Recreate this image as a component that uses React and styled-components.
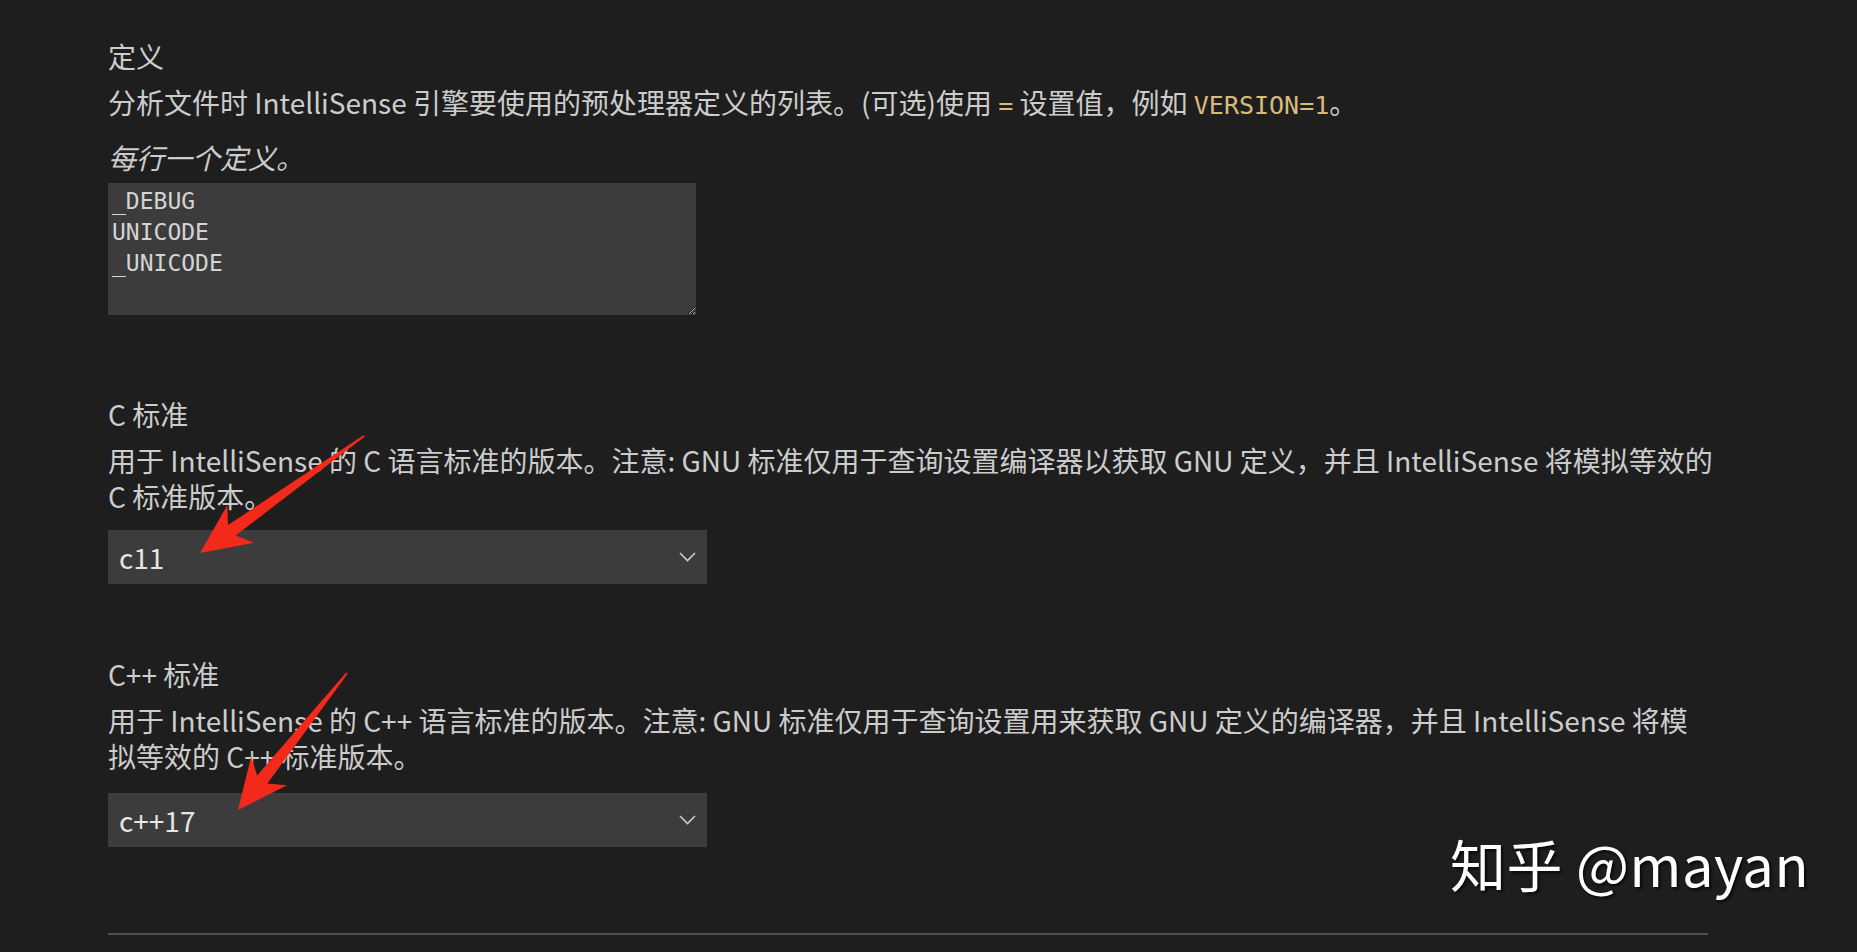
import styled, { createGlobalStyle } from 'styled-components'

const GlobalStyle = createGlobalStyle`
  html, body {
    margin: 0;
    background: #1e1e1e;
  }
  body {
    font-family: "Noto Sans CJK SC", "Noto Sans", sans-serif;
    color: #cccccc;
  }
`

// tapered annotation arrow, tip -> tail
const arrowShape = ([tx, ty], [sx, sy]) => {
  const dx = sx - tx
  const dy = sy - ty
  const len = Math.hypot(dx, dy)
  const ux = dx / len
  const uy = dy / len
  const px = -uy
  const py = ux
  const pt = (a, p) =>
    `${(tx + ux * a + px * p).toFixed(1)},${(ty + uy * a + py * p).toFixed(1)}`
  return [pt(0, 0), pt(50, 23), pt(39, 6.5), pt(len, 1), pt(len, -1), pt(39, -6.5), pt(50, -23)].join(' ')
}

const arrows = [
  { tip: [200, 553], tail: [364, 436] },
  { tip: [238, 810], tail: [347, 673] },
]

const Chevron = () => (
  <svg width="17" height="10" viewBox="0 0 17 10" fill="none">
    <polyline points="1,1 8.5,8.5 16,1" stroke="#cccccc" strokeWidth="1.6" />
  </svg>
)

const Dropdown = ({ value }) => (
  <Select>
    <span>{value}</span>
    <Chevron />
  </Select>
)

const App = () => {
  return (
    <>
      <GlobalStyle />
      <Page>
        <Settings>
          <Section $gap={81}>
            <Title>定义</Title>
            <Desc $gap={15}>
              分析文件时 IntelliSense 引擎要使用的预处理器定义的列表。(可选)使用 <Code>=</Code> 设置值，例如 <Code>VERSION=1</Code>。
            </Desc>
            <Hint>每行一个定义。</Hint>
            <Defines readOnly defaultValue={'_DEBUG\nUNICODE\n_UNICODE'} spellCheck={false} />
          </Section>

          <Section $gap={72}>
            <Title>C 标准</Title>
            <Desc>
              用于 IntelliSense 的 C 语言标准的版本。注意: GNU 标准仅用于查询设置编译器以获取 GNU 定义，并且 IntelliSense 将模拟等效的 C 标准版本。
            </Desc>
            <Dropdown value="c11" />
          </Section>

          <Section $gap={86}>
            <Title>C++ 标准</Title>
            <Desc $gap={19}>
              用于 IntelliSense 的 C++ 语言标准的版本。注意: GNU 标准仅用于查询设置用来获取 GNU 定义的编译器，并且 IntelliSense 将模拟等效的 C++ 标准版本。
            </Desc>
            <Dropdown value="c++17" />
          </Section>

          <Divider />
        </Settings>

        <Overlay width="1857" height="952" viewBox="0 0 1857 952">
          {arrows.map((a, i) => (
            <polygon key={i} points={arrowShape(a.tip, a.tail)} fill="#f3291b" />
          ))}
        </Overlay>

        <Watermark>知乎 @mayan</Watermark>
      </Page>
    </>
  )
}

export default App

const Page = styled.div`
  position: relative;
  width: 1857px;
  height: 952px;
  overflow: hidden;
  box-sizing: border-box;
  padding: 38px 0 0 108px;
`

const Settings = styled.div`
  width: 1600px;
`

const Section = styled.section`
  margin-bottom: ${p => p.$gap}px;
`

const Title = styled.div`
  font-size: 28px;
  line-height: 36px;
  margin-bottom: 10px;
`

const Desc = styled.div`
  width: 1605px;
  font-size: 28px;
  line-height: 36px;
  margin-bottom: ${p => p.$gap ?? 16}px;
`

const Code = styled.span`
  font-family: "DejaVu Sans Mono", "Liberation Mono", monospace;
  font-size: 25px;
  color: #d7ba7d;
`

const Hint = styled.div`
  font-size: 28px;
  line-height: 36px;
  font-style: italic;
  margin-bottom: 8px;
`

const Defines = styled.textarea`
  display: block;
  box-sizing: border-box;
  width: 588px;
  height: 132px;
  margin: 0;
  padding: 3px 4px;
  border: none;
  outline: none;
  resize: vertical;
  background: #3c3c3c;
  color: #d4d4d4;
  font-family: "DejaVu Sans Mono", "Liberation Mono", monospace;
  font-size: 23px;
  line-height: 31px;
  color-scheme: dark;
`

const Select = styled.div`
  box-sizing: border-box;
  width: 599px;
  height: 54px;
  padding: 0 11px;
  display: flex;
  align-items: center;
  justify-content: space-between;
  background: #3c3c3c;
  color: #e6e6e6;
  font-size: 28px;
`

const Divider = styled.div`
  height: 2px;
  background: #4f4f4f;
`

const Overlay = styled.svg`
  position: absolute;
  left: 0;
  top: 0;
  pointer-events: none;
`

const Watermark = styled.div`
  position: absolute;
  left: 1450px;
  top: 835px;
  font-size: 56px;
  line-height: 56px;
  letter-spacing: 0.5px;
  color: #ffffff;
  text-shadow: 2px 2px 3px rgba(0, 0, 0, 0.7);
  white-space: nowrap;
`
